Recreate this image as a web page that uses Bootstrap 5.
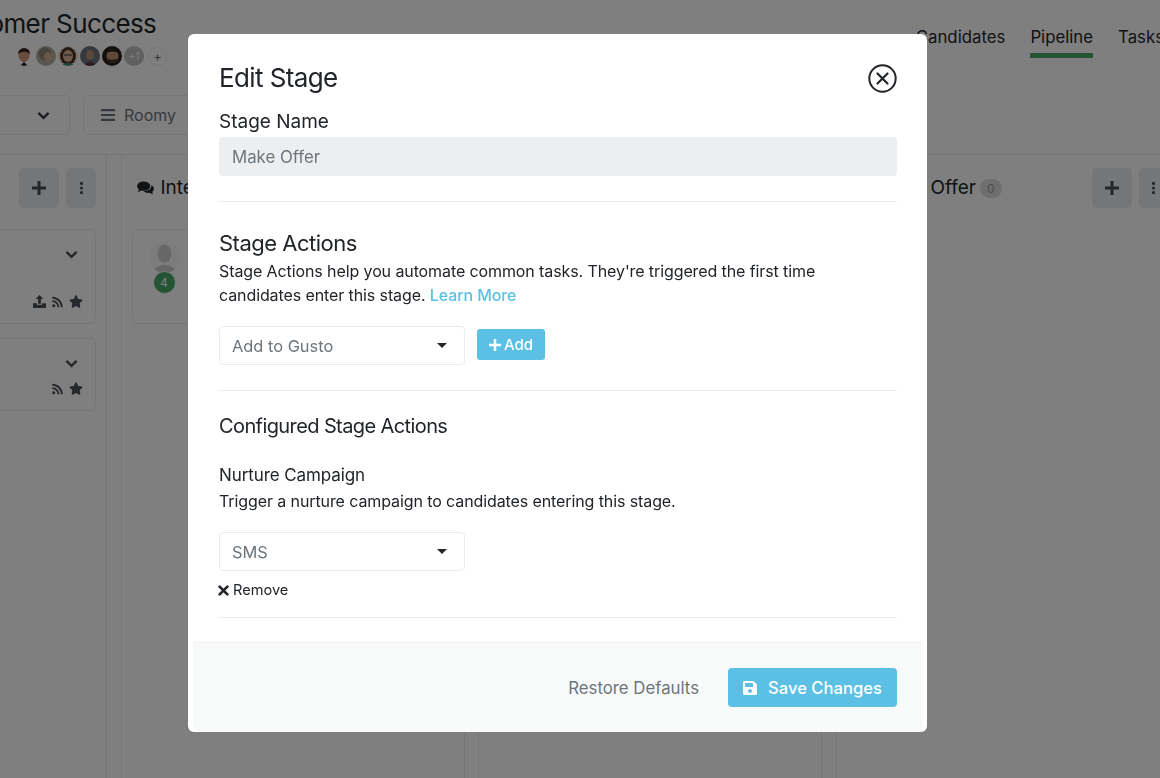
<!DOCTYPE html>
<html>
<head>
  <title>Edit Stage</title>
  <link rel="stylesheet" href="https://cdn.jsdelivr.net/npm/bootstrap@5.3.3/dist/css/bootstrap.min.css">
  <style>
    html, body { height: 100%; overflow: hidden; }
    body { font-family: Inter, "Liberation Sans", sans-serif; color: #212529; background: #fff; }
    .ic { fill: currentColor; display: inline-block; }

    /* page behind the modal */
    .page-wrap { width: 1417px; margin-left: -237px; height: 778px; overflow: hidden; }
    .top-bar { height: 155px; border-bottom: 1px solid #e9ecef; position: relative; }
    .head-row { display: flex; justify-content: space-between; padding-left: 171.500px; height: 95px; }
    .page-title { font-size: 26px; letter-spacing: -.6px; font-weight: 400; margin: 8px 0 0 0; line-height: 32px; white-space: nowrap; }
    .avatars { display: flex; gap: 2px; margin: 6px 0 0 79.500px; align-items: center; }
    .avatars svg { width: 20px; height: 20px; border-radius: 50%; }
    .av-more { width: 20px; height: 20px; border-radius: 50%; background: #c0c0c0; color: #fff; font-size: 10px; line-height: 20px; text-align: center; }
    .av-add { width: 19px; height: 19px; margin-left: 2px; border-radius: 50%; border: 1px solid #e9ecef; color: #6c757d; font-size: 13px; line-height: 16px; text-align: center; }
    .top-nav { display: flex; gap: 25px; padding-right: 16px; margin-top: 25px; }
    .top-nav a { color: #212529; text-decoration: none; font-size: 16.800px; height: 33px; line-height: 24px; }
    .top-nav a.on { border-bottom: 5px solid #48a868; }
    .tool-row { display: flex; gap: 13px; }
    .tool-box { height: 40px; border: 1px solid #e9ecef; border-radius: 5px; display: flex; align-items: center; color: #6c757d; font-size: 16px; }
    .tool-a { width: 307px; justify-content: flex-end; padding-right: 19px; color: #343a40; }
    .tool-b { width: 140px; padding-left: 17px; gap: 9px; }
    .cols { display: flex; gap: 13.5px; }
    .stage-col { width: 344px; flex: none; height: 640px; border: 1px solid #e9ecef; border-top: 0; border-bottom: 0; padding-top: 13px; }
    .col-head { display: flex; align-items: center; height: 40px; padding: 0 10px 0 15px; gap: 7px; font-size: 19px; margin-bottom: 21px; }
    .offer-name { padding-left: 79px; }
    .sq-btn { height: 40px; background: #e9ecef; border-radius: 5px; color: #495057; display: flex; align-items: center; justify-content: center; }
    .sq-plus { width: 40px; }
    .sq-dots { width: 30px; }
    .cnt-pill { font-size: 12px; background: #dcdcdc; color: #999; border-radius: 10px; padding: 0 7px; line-height: 19px; }
    .stage-item { margin: 0 10px 14px; border: 1px solid #e9ecef; border-radius: 5px; position: relative; color: #495057; }
    .item-tall { height: 95px; }
    .item-short { height: 73px; }
    .item-chev { position: absolute; right: 17px; top: 19px; }
    .item-icons { position: absolute; right: 12px; display: flex; gap: 6px; align-items: center; bottom: 15px; }
    .who { position: absolute; left: 16px; top: 12px; width: 31px; height: 31px; border-radius: 50%; background: #f8f8f8; overflow: hidden; }
    .who-num { position: absolute; left: 20px; top: 41px; width: 23px; height: 23px; border-radius: 50%; background: #48a868; color: #fff; border: 1px solid #fff; font-size: 12px; line-height: 21px; text-align: center; }

    /* modal */
    .modal.edit-modal { display: block; overflow: hidden; }
    .edit-modal .modal-dialog { max-width: 739px; margin: 34px 0 0 188px; }
    .edit-modal .modal-content { border: 0; border-radius: 6px; height: 698px; }
    .edit-modal .modal-body { padding: 26px 30px 0 31px; flex: 1; }
    .title-row { display: flex; justify-content: space-between; align-items: center; height: 36px; margin-bottom: 14px; }
    .modal-title { font-size: 26px; letter-spacing: -.6px; font-weight: 400; line-height: 36px; }
    .close-x { width: 29px; height: 29px; padding: 0; border: 0; background: none; color: #212529; display: block; margin-top: 1px; }
    .fld-label { font-size: 19px; line-height: 23px; margin: 0 0 4px; font-weight: 400; display: block; }
    .edit-modal .form-control { height: 39px; background: #eceef0; border: 0; border-radius: 4px; font-size: 16.800px; color: #6c757d; padding: 0 13px; opacity: 1; }
    .sep { border: 0; border-top: 1px solid #e9ecef; opacity: 1; margin: 0; }
    .sep-a { margin-top: 25px; }
    .sep-b { margin-top: 25px; }
    .h-actions { font-size: 22px; letter-spacing: -.5px; font-weight: 400; line-height: 28px; margin: 27px 0 0; }
    .intro { font-size: 16px; letter-spacing: -.1px; line-height: 24px; margin: 2px 0 19px; }
    .intro a { color: #5bc0e4; text-decoration: none; font-weight: 500; }
    .pick-row { display: flex; gap: 12px; align-items: center; }
    .edit-modal .form-select { width: 246px; height: 39px; border: 1px solid #e9ecef; border-radius: 4px; font-size: 16.400px; color: #6c757d; padding: 2px 12px 0; background-image: none; flex: none; }
    .pick-wrap { position: relative; width: 246px; flex: none; }
    .pick-caret { position: absolute; right: 18px; top: 17px; width: 0; height: 0; border-left: 5px solid transparent; border-right: 5px solid transparent; border-top: 5px solid #212529; pointer-events: none; }
    .btn-add { background: #5bc0e4; color: #fff; border: 0; height: 31px; width: 68px; padding: 1px 0 0; margin-top: -2px; border-radius: 3px; font-size: 15px; font-weight: 500; display: flex; align-items: center; justify-content: center; gap: 3px; }
    .h-conf { font-size: 20px; letter-spacing: -.6px; font-weight: 400; line-height: 26px; margin: 22px 0 0; }
    .h-nurture { font-size: 17px; letter-spacing: -.1px; font-weight: 400; line-height: 22px; margin: 25px 0 0; }
    .intro2 { font-size: 16px; letter-spacing: -.1px; line-height: 24px; margin: 3px 0 19px; }
    .remove-link { display: flex; align-items: center; gap: 4px; font-size: 14.600px; line-height: 20px; color: #212529; text-decoration: none; margin: 9px 0 17px -1px; }
    .edit-modal .modal-footer { height: 90px; padding: 0 25px 0 0; margin: 0 5px; background: #f8f9f9; border-top: 1px solid #eff1f1; border-radius: 0 0 6px 6px; display: flex; justify-content: flex-end; align-items: center; gap: 29px; flex-wrap: nowrap; }
    .btn-restore { font-size: 16.800px; color: #6c757d; padding: 3px 0 0; margin: 0; border: 0; background: none; }
    .btn-save { background: #5bc0e4; color: #fff; border: 0; width: 169px; height: 39px; padding: 1px 0 0; margin: 0; border-radius: 4px; font-size: 16.600px; font-weight: 500; display: flex; align-items: center; justify-content: center; gap: 11px; }
  </style>
</head>
<body>

  <svg width="0" height="0" class="position-absolute">
    <symbol id="i-plus" viewBox="1 1 14 14"><path d="M6.500 1h3v5.500H15v3H9.500V15h-3V9.500H1v-3h5.500z"/></symbol>
    <symbol id="i-dots" viewBox="0 0 6 16"><circle cx="3" cy="2.500" r="1.900"/><circle cx="3" cy="8" r="1.900"/><circle cx="3" cy="13.500" r="1.900"/></symbol>
    <symbol id="i-chev" viewBox="0 0 14 10"><path d="M1.500 2.700 7 8l5.500-5.300" fill="none" stroke="currentColor" stroke-width="2.600"/></symbol>
    <symbol id="i-bars" viewBox="0 0 14 12"><path d="M0 0h14v2.200H0zM0 4.900h14v2.200H0zM0 9.800h14V12H0z"/></symbol>
    <symbol id="i-talk" viewBox="0 0 18 15"><ellipse cx="7" cy="5.500" rx="7" ry="5"/><path d="M2 8.500 1 12l4-2z"/><path d="M15.300 4.300c1.700 1 2.700 2.400 2.700 3.900 0 1.300-.7 2.400-1.800 3.300l.8 3-3.500-1.800c-2.700.4-5.300-.4-6.700-2 4.800.3 9-2.100 8.500-6.400z"/></symbol>
    <symbol id="i-up" viewBox="0 0 14 14"><path d="M7 0l4.200 4.400H8.500v5h-3v-5H2.800zM0 9h4.200v1.600h5.600V9H14v5H0z"/></symbol>
    <symbol id="i-rss" viewBox="0 0 448 512"><path d="M128.081 415.959c0 35.369-28.672 64.041-64.041 64.041S0 451.328 0 415.959s28.672-64.041 64.041-64.041 64.04 28.673 64.04 64.041zm175.66 47.25c-8.354-154.6-132.185-278.587-286.95-286.95C7.656 175.765 0 183.105 0 192.253v48.069c0 8.415 6.49 15.472 14.887 16.018 111.832 7.284 201.473 96.702 208.772 208.772.547 8.397 7.604 14.887 16.018 14.887h48.069c9.149.001 16.489-7.655 15.995-16.79zm144.249.288C439.596 229.677 251.465 40.445 16.503 32.01 7.473 31.686 0 38.981 0 48.016v48.068c0 8.625 6.835 15.645 15.453 15.999 191.179 7.839 344.627 161.316 352.465 352.465.353 8.618 7.373 15.453 15.999 15.453h48.068c9.034-.001 16.329-7.474 16.005-16.504z"/></symbol>
    <symbol id="i-star" viewBox="0 0 576 512"><path d="M259.3 17.8L194 150.2 47.9 171.5c-26.2 3.8-36.7 36.1-17.7 54.6l105.7 103-25 145.5c-4.5 26.3 23.2 46 46.4 33.7L288 439.6l130.7 68.7c23.2 12.2 50.9-7.4 46.4-33.7l-25-145.5 105.7-103c19-18.5 8.5-50.8-17.7-54.6L382 150.2 316.7 17.8c-11.7-23.6-45.6-23.9-57.4 0z"/></symbol>
    <symbol id="i-save" viewBox="0 0 448 512"><path d="M433.941 129.941l-83.882-83.882A48 48 0 0 0 316.118 32H48C21.49 32 0 53.49 0 80v352c0 26.51 21.49 48 48 48h352c26.51 0 48-21.49 48-48V163.882a48 48 0 0 0-14.059-33.941zM224 416c-35.346 0-64-28.654-64-64 0-35.346 28.654-64 64-64s64 28.654 64 64c0 35.346-28.654 64-64 64zm96-304.52V212c0 6.627-5.373 12-12 12H76c-6.627 0-12-5.373-12-12V108c0-6.627 5.373-12 12-12h228.52c3.183 0 6.235 1.264 8.485 3.515l3.48 3.48A11.996 11.996 0 0 1 320 111.48z"/></symbol>
    <symbol id="i-x" viewBox="0 0 12 12"><path d="M1.800 1.800l8.400 8.400M10.200 1.800l-8.400 8.400" fill="none" stroke="currentColor" stroke-width="3" stroke-linecap="round"/></symbol>
  </svg>

  <div class="page-wrap">
    <div class="top-bar">
      <div class="head-row">
        <div>
          <h1 class="page-title">Customer Success</h1>
          <div class="avatars">
            <svg viewBox="0 0 20 20"><rect width="20" height="20" fill="#fff"/><ellipse cx="10" cy="9" rx="5.500" ry="7" fill="#d09a78"/><path d="M4 8c0-7 12-8 12 0-3-3-8-3-12 0z" fill="#3a2418"/><path d="M6 20l4-4 4 4z" fill="#222"/></svg>
            <svg viewBox="0 0 20 20"><rect width="20" height="20" fill="#b5aca0"/><circle cx="9" cy="8" r="6.500" fill="#8f8479"/><ellipse cx="12" cy="11" rx="4" ry="5" fill="#cbae95"/></svg>
            <svg viewBox="0 0 20 20"><rect width="20" height="20" fill="#efe9df"/><ellipse cx="10" cy="10" rx="8" ry="9" fill="#4c3226"/><ellipse cx="10" cy="10" rx="5" ry="6" fill="#dcb295"/><path d="M6 9h8" stroke="#333" stroke-width="1"/><path d="M3 20c2-4 12-4 14 0z" fill="#3d8f68"/></svg>
            <svg viewBox="0 0 20 20"><rect width="20" height="20" fill="#6d737a"/><ellipse cx="10" cy="9" rx="4" ry="5" fill="#b4917b"/><path d="M4 20c1-5 11-5 12 0z" fill="#3b3e44"/><path d="M9 15h2v5H9z" fill="#8a2b3a"/></svg>
            <svg viewBox="0 0 20 20"><rect width="20" height="20" fill="#2a211c"/><ellipse cx="10.500" cy="10" rx="6" ry="7" fill="#c08f6f"/><path d="M4 7c1-5 12-5 13 0-3-2-10-2-13 0z" fill="#1e1510"/><path d="M5 12c2 7 9 7 11 0-2 2-9 2-11 0z" fill="#4a3628"/></svg>
            <div class="av-more">+1</div>
            <div class="av-add">+</div>
          </div>
        </div>
        <nav class="top-nav">
          <a href="#">Candidates</a>
          <a href="#" class="on">Pipeline</a>
          <a href="#">Tasks</a>
        </nav>
      </div>
      <div class="tool-row">
        <div class="tool-box tool-a"><svg class="ic" width="13" height="10"><use href="#i-chev"/></svg></div>
        <div class="tool-box tool-b"><svg class="ic" width="14" height="12"><use href="#i-bars"/></svg>Roomy</div>
      </div>
    </div>

    <div class="cols">
      <div class="stage-col">
        <div class="col-head">
          <span class="flex-grow-1"></span>
          <div class="sq-btn sq-plus"><svg class="ic" width="14" height="14"><use href="#i-plus"/></svg></div>
          <div class="sq-btn sq-dots"><svg class="ic" width="5" height="14"><use href="#i-dots"/></svg></div>
        </div>
        <div class="stage-item item-tall">
          <svg class="ic item-chev" width="13" height="10"><use href="#i-chev"/></svg>
          <div class="item-icons">
            <svg class="ic" width="13" height="13"><use href="#i-up"/></svg>
            <svg class="ic" width="11" height="12"><use href="#i-rss"/></svg>
            <svg class="ic" width="14" height="13"><use href="#i-star"/></svg>
          </div>
        </div>
        <div class="stage-item item-short">
          <svg class="ic item-chev" width="13" height="10"><use href="#i-chev"/></svg>
          <div class="item-icons">
            <svg class="ic" width="11" height="12"><use href="#i-rss"/></svg>
            <svg class="ic" width="14" height="13"><use href="#i-star"/></svg>
          </div>
        </div>
      </div>

      <div class="stage-col">
        <div class="col-head">
          <svg class="ic" width="17" height="14"><use href="#i-talk"/></svg>
          <span class="flex-grow-1">Interview</span>
        </div>
        <div class="stage-item item-tall">
          <div class="who">
            <svg viewBox="0 0 32 32" width="31" height="31"><ellipse cx="16" cy="12" rx="7" ry="9.500" fill="#cfcfcf"/><path d="M4 32c1-11 23-11 24 0z" fill="#cfcfcf"/></svg>
          </div>
          <div class="who-num">4</div>
        </div>
      </div>

      <div class="stage-col"></div>

      <div class="stage-col">
        <div class="col-head">
          <span class="flex-grow-1 d-flex align-items-center gap-1 offer-name"><span>Offer</span><span class="cnt-pill">0</span></span>
          <div class="sq-btn sq-plus"><svg class="ic" width="14" height="14"><use href="#i-plus"/></svg></div>
          <div class="sq-btn sq-dots"><svg class="ic" width="5" height="14"><use href="#i-dots"/></svg></div>
        </div>
      </div>
    </div>
  </div>

  <div class="modal-backdrop show"></div>

  <div class="modal edit-modal">
    <div class="modal-dialog">
      <div class="modal-content">
        <div class="modal-body">
          <div class="title-row">
            <h5 class="modal-title">Edit Stage</h5>
            <button class="close-x" type="button" aria-label="Close">
              <svg viewBox="0 0 29 29" width="29" height="29"><circle cx="14.500" cy="14.500" r="13.200" fill="none" stroke="currentColor" stroke-width="2"/><path d="M9.500 9.500l10 10M19.500 9.500l-10 10" fill="none" stroke="currentColor" stroke-width="2.200" stroke-linecap="round"/></svg>
            </button>
          </div>

          <label class="fld-label" for="stage-name">Stage Name</label>
          <input id="stage-name" class="form-control" type="text" value="Make Offer" disabled>

          <hr class="sep sep-a">

          <h4 class="h-actions">Stage Actions</h4>
          <p class="intro">Stage Actions help you automate common tasks. They're triggered the first time candidates enter this stage. <a href="#">Learn More</a></p>

          <div class="pick-row">
            <div class="pick-wrap">
              <select class="form-select"><option>Add to Gusto</option></select>
              <span class="pick-caret"></span>
            </div>
            <button class="btn btn-add" type="button"><svg class="ic" width="12" height="12"><use href="#i-plus"/></svg>Add</button>
          </div>

          <hr class="sep sep-b">

          <h5 class="h-conf">Configured Stage Actions</h5>
          <h6 class="h-nurture">Nurture Campaign</h6>
          <p class="intro2">Trigger a nurture campaign to candidates entering this stage.</p>

          <div class="pick-wrap">
            <select class="form-select"><option>SMS</option></select>
            <span class="pick-caret"></span>
          </div>
          <a class="remove-link" href="#"><svg class="ic" width="11" height="11"><use href="#i-x"/></svg>Remove</a>

          <hr class="sep">
        </div>
        <div class="modal-footer">
          <button class="btn btn-restore" type="button">Restore Defaults</button>
          <button class="btn btn-save" type="button"><svg class="ic" width="14" height="16"><use href="#i-save"/></svg>Save Changes</button>
        </div>
      </div>
    </div>
  </div>

  <script src="https://cdn.jsdelivr.net/npm/bootstrap@5.3.3/dist/js/bootstrap.bundle.min.js"></script>
</body>
</html>
